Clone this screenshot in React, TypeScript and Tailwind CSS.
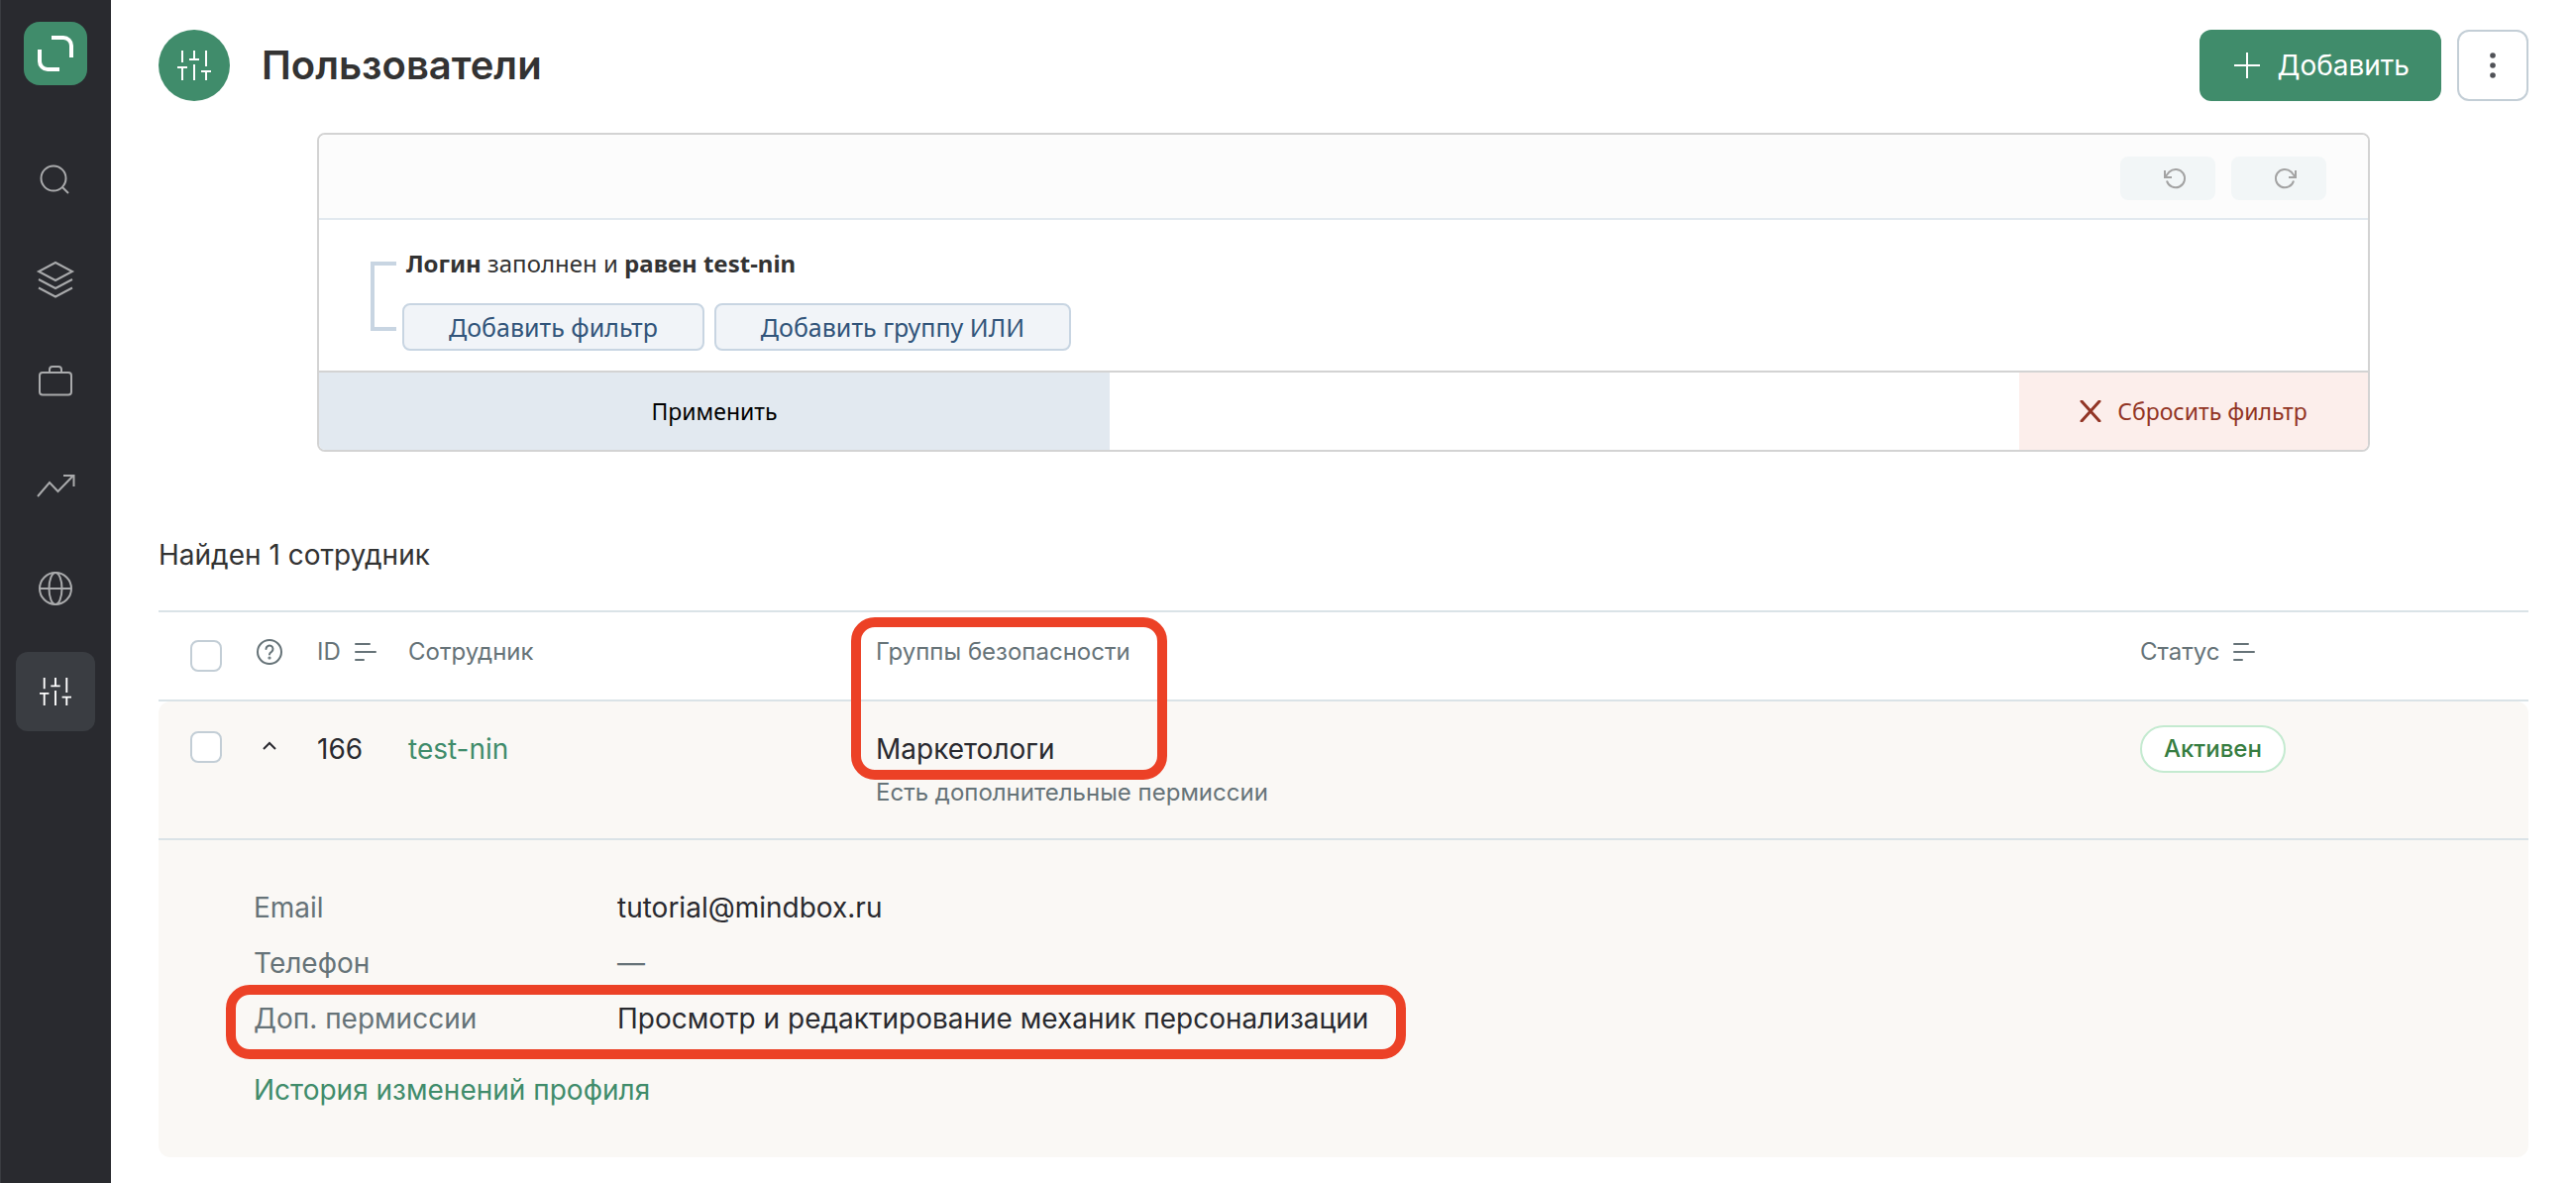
import type { ReactNode } from "react";

const navItems = [
  {
    label: "Поиск",
    icon: (
      <>
        <circle cx="18" cy="22" r="12.500" />
        <path d="M27 31l6 6" />
      </>
    )
  },
  {
    label: "Продукты",
    icon: (
      <>
        <path d="M20 3L3 12l17 9 17-9z" />
        <path d="M3 20l17 9 17-9" />
        <path d="M3 28.500l17 9 17-9" />
      </>
    )
  },
  {
    label: "Кампании",
    icon: (
      <>
        <rect x="4" y="10" width="32" height="22.500" rx="3" />
        <path d="M14 10V7a3 3 0 0 1 3-3h6a3 3 0 0 1 3 3v3" />
      </>
    )
  },
  {
    label: "Отчёты",
    icon: (
      <>
        <path d="M2 31L14 17l8.500 9L38 10" />
        <path d="M28 10h10.500v11" />
      </>
    )
  },
  {
    label: "Интеграции",
    icon: (
      <>
        <circle cx="20" cy="20" r="16" />
        <ellipse cx="20" cy="20" rx="6.500" ry="16" />
        <path d="M4 20h32" />
      </>
    )
  }
];

const details: { label: string; value: string; muted?: boolean; marked?: boolean }[] = [
  { label: "Email", value: "tutorial@mindbox.ru" },
  { label: "Телефон", value: "—", muted: true },
  { label: "Доп. пермиссии", value: "Просмотр и редактирование механик персонализации", marked: true }
];

function SlidersIcon({ className }: { className: string }) {
  return (
    <svg viewBox="0 0 34 34" className={className} fill="none" stroke="currentColor" strokeWidth="2" aria-hidden="true">
      <path d="M5 2v12M0 19h10M5 19v13M17 2v9M12 11h10M17 16v16M29 2v16M24 23h10M29 23v9" />
    </svg>
  );
}

function SortIcon() {
  return (
    <svg viewBox="0 0 22 20" className="h-5 w-[22px]" stroke="currentColor" strokeWidth="2" strokeLinecap="round" aria-hidden="true">
      <path d="M1 2h14M1 10h20M1 18h8" />
    </svg>
  );
}

function RotateIcon({ flipped = false }: { flipped?: boolean }) {
  return (
    <svg
      viewBox="0 0 24 24"
      className={flipped ? "ml-3 size-6 -scale-x-100" : "ml-4 size-6"}
      fill="none"
      stroke="currentColor"
      strokeWidth="2"
      aria-hidden="true"
    >
      <path d="M1 4v7h7" />
      <path d="M1.500 10.500L5.500 5.500A9.200 9.200 0 1 1 3 14.500" />
    </svg>
  );
}

function Checkbox({ label }: { label: string }) {
  return (
    <input
      type="checkbox"
      aria-label={label}
      className="block size-8 appearance-none rounded-lg border-2 border-[#c3ced6] bg-white checked:bg-[#408c6b]"
    />
  );
}

function FilterButton({ children }: { children: ReactNode }) {
  return (
    <button
      type="button"
      className="h-12 rounded-lg border-2 border-[#c8d5e2] bg-[#f1f4f8] px-[45px] text-[25px] leading-8 text-[#31547a]"
    >
      {children}
    </button>
  );
}

function Sidebar() {
  return (
    <aside className="flex w-28 shrink-0 flex-col items-center bg-[#292a2f] pt-[22px] shadow-[inset_1px_0_0_#3a3c41]">
      <a href="#home" aria-label="Главная" className="grid size-16 place-items-center rounded-2xl bg-[#408c6b]">
        <svg viewBox="0 0 64 64" className="size-16" fill="none" stroke="#fff" strokeWidth="4" aria-hidden="true">
          <path d="M28 16h12a8 8 0 0 1 8 8v12" />
          <path d="M16 28v12a8 8 0 0 0 8 8h12" />
        </svg>
      </a>
      <nav className="mt-[52px] flex flex-col gap-6">
        {navItems.map(({ label, icon }) => (
          <a key={label} href="#section" aria-label={label} className="grid size-20 place-items-center text-[#a9aaac]">
            <svg viewBox="0 0 40 40" className="size-10" fill="none" stroke="currentColor" strokeWidth="2" aria-hidden="true">
              {icon}
            </svg>
          </a>
        ))}
        <a
          href="#settings"
          aria-label="Настройки"
          aria-current="page"
          className="grid size-20 place-items-center rounded-xl bg-[#3a3d42] text-white"
        >
          <SlidersIcon className="size-8" />
        </a>
      </nav>
    </aside>
  );
}

function FilterPanel() {
  return (
    <section className="mx-40 mt-8 overflow-hidden rounded-lg border-2 border-[#d3d3d3] font-['Noto_Sans',sans-serif]">
      <div className="flex h-[86px] items-center justify-end gap-4 border-b-2 border-[#e2e9ef] bg-[#fcfcfc] pt-1 pr-[42px]">
        <button type="button" aria-label="Отменить" className="grid h-11 w-24 place-items-center rounded-lg bg-[#f2f6f7] text-[#a3a3a3]">
          <RotateIcon />
        </button>
        <button type="button" aria-label="Повторить" className="grid h-11 w-24 place-items-center rounded-lg bg-[#f2f6f7] text-[#a3a3a3]">
          <RotateIcon flipped />
        </button>
      </div>
      <div className="flex h-[152px] items-center px-[52px]">
        <div className="mt-0.5 h-[70px] w-[26px] border-y-4 border-l-4 border-[#c8d5e2]" />
        <div className="ml-1.5 flex flex-col gap-6 pt-2">
          <p className="pl-1 text-2xl text-[#333]">
            <b>Логин</b> заполнен и <b>равен test-nin</b>
          </p>
          <div className="flex gap-2.5">
            <FilterButton>Добавить фильтр</FilterButton>
            <FilterButton>Добавить группу ИЛИ</FilterButton>
          </div>
        </div>
      </div>
      <div className="flex h-20 justify-between border-t-2 border-[#d3d3d3]">
        <button type="button" className="w-[798px] bg-[#e2e9f0] text-[23px] text-black">
          Применить
        </button>
        <button type="button" className="flex w-[352px] items-center justify-center gap-4 bg-[#fceeeb] text-[23px] text-[#923525]">
          <svg viewBox="0 0 22 22" className="size-[22px]" stroke="currentColor" strokeWidth="3" strokeLinecap="round" aria-hidden="true">
            <path d="M2 1l18 20M20 1L2 21" />
          </svg>
          Сбросить фильтр
        </button>
      </div>
    </section>
  );
}

function UsersTable() {
  return (
    <table className="mt-9 w-full table-fixed border-separate border-spacing-0 text-left">
      <colgroup>
        <col className="w-24" />
        <col className="w-16" />
        <col className="w-[92px]" />
        <col className="w-[472px]" />
        <col />
        <col className="w-[392px]" />
      </colgroup>
      <thead className="text-2xl text-[#667378] [&_th]:h-[92px] [&_th]:border-y-2 [&_th]:border-[#dae3e7] [&_th]:font-normal">
        <tr>
          <th className="pl-8">
            <Checkbox label="Выбрать всех" />
          </th>
          <th className="pb-2">
            <svg viewBox="0 0 32 32" className="size-8" fill="none" stroke="currentColor" strokeWidth="2" strokeLinecap="round" aria-hidden="true">
              <circle cx="16" cy="16" r="12" />
              <path d="M12.500 13a3.500 3.500 0 1 1 5.500 2.900c-1.300.8-2 1.400-2 2.600" />
              <circle cx="16" cy="22" r=".6" />
            </svg>
          </th>
          <th className="pb-2">
            <span className="flex items-center gap-3.5">
              ID <SortIcon />
            </span>
          </th>
          <th className="pb-2">Сотрудник</th>
          <th className="relative pb-2">
            Группы безопасности
            <span className="pointer-events-none absolute top-[5px] -left-[25px] z-10 h-[164px] w-[319px] rounded-3xl border-10 border-[#ec4126]" />
          </th>
          <th className="pb-2">
            <span className="flex items-center gap-3.5">
              Статус <SortIcon />
            </span>
          </th>
        </tr>
      </thead>
      <tbody className="text-[28px] leading-10 text-[#292a2f] [&_td]:bg-[#faf8f5] [&_td]:align-top">
        <tr className="[&_td]:h-[140px] [&_td]:border-b-2 [&_td]:border-[#dae3e7] [&_td]:pt-7">
          <td className="rounded-tl-xl pl-8">
            <div className="pt-0.5">
              <Checkbox label="Выбрать test-nin" />
            </div>
          </td>
          <td>
            <button type="button" aria-label="Свернуть" className="grid size-8 place-items-center pt-0.5">
              <svg viewBox="0 0 16 10" className="h-[10px] w-4" fill="none" stroke="currentColor" strokeWidth="2" aria-hidden="true">
                <path d="M2 8l6-6 6 6" />
              </svg>
            </button>
          </td>
          <td>166</td>
          <td>
            <a href="#test-nin" className="text-[#408c6b]">
              test-nin
            </a>
          </td>
          <td>
            Маркетологи
            <p className="mt-1 text-2xl leading-10 text-[#667378]">Есть дополнительные пермиссии</p>
          </td>
          <td className="rounded-tr-xl">
            <span className="-mt-1 flex h-12 w-fit items-center rounded-full border-2 border-[#c4ead0] bg-white px-[22px] text-2xl font-medium text-[#377d41]">
              Активен
            </span>
          </td>
        </tr>
        <tr>
          <td colSpan={6} className="rounded-b-xl px-24 pt-10 pb-12">
            <dl>
              {details.map(({ label, value, muted, marked }) => (
                <div key={label} className="relative flex w-fit py-2">
                  <dt className="w-[367px] text-[#667378]">{label}</dt>
                  <dd className={muted ? "text-[#667378]" : ""}>{value}</dd>
                  {marked && (
                    <span className="pointer-events-none absolute -top-[6px] -right-[38px] -left-7 h-[75px] rounded-3xl border-10 border-[#ec4126]" />
                  )}
                </div>
              ))}
            </dl>
            <a href="#history" className="mt-6 block w-fit text-[#408c6b]">
              История изменений профиля
            </a>
          </td>
        </tr>
      </tbody>
    </table>
  );
}

export default function App() {
  return (
    <div className="flex min-h-screen bg-white font-['Inter',sans-serif] text-[#333]">
      <Sidebar />
      <main className="min-w-0 flex-1 px-12 pt-[30px]">
        <header className="flex items-center">
          <span className="grid size-[72px] place-items-center rounded-full bg-[#408c6b] text-white">
            <SlidersIcon className="size-[34px]" />
          </span>
          <h1 className="ml-8 text-[40px] leading-[48px] font-semibold">Пользователи</h1>
          <div className="ml-auto flex gap-4">
            <button type="button" className="flex h-[72px] items-center gap-4 rounded-xl bg-[#408c6b] pr-8 pl-[34px] text-[28px] text-white">
              <svg viewBox="0 0 28 28" className="size-7" stroke="currentColor" strokeWidth="2" aria-hidden="true">
                <path d="M14 1v26M1 14h26" />
              </svg>
              Добавить
            </button>
            <button type="button" aria-label="Ещё" className="grid size-[72px] place-items-center rounded-xl border-2 border-[#c3ced6] text-[#505257]">
              <svg viewBox="0 0 6 26" className="h-[26px] w-[6px]" fill="currentColor" aria-hidden="true">
                <circle cx="3" cy="3" r="2.800" />
                <circle cx="3" cy="13" r="2.800" />
                <circle cx="3" cy="23" r="2.800" />
              </svg>
            </button>
          </div>
        </header>
        <FilterPanel />
        <p className="mt-[84px] text-[28px] leading-10">Найден 1 сотрудник</p>
        <UsersTable />
      </main>
    </div>
  );
}
